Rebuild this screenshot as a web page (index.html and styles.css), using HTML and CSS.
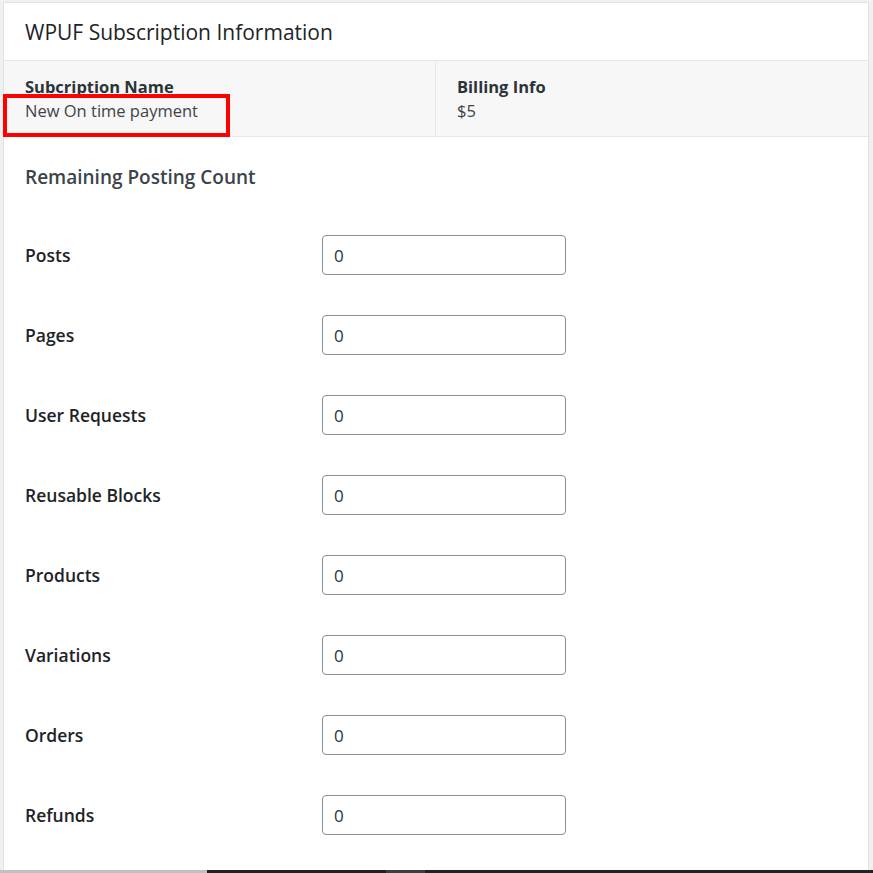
FILE: index.html
```html
<!DOCTYPE html>
<html lang="en">
<head>
  <meta charset="UTF-8">
  <meta name="viewport" content="width=device-width, initial-scale=1.0">
  <title>WPUF Subscription Information</title>
  <link rel="stylesheet" href="styles.css">
</head>
<body>
  <div class="wrap">
    <div class="postbox">
      <h2 class="postbox-title">WPUF Subscription Information</h2>

      <div class="sub-info">
        <div class="sub-col name-col">
          <strong>Subcription Name</strong>
          <span>New On time payment</span>
          <div class="highlight"></div>
        </div>
        <div class="sub-col">
          <strong>Billing Info</strong>
          <span>$5</span>
        </div>
      </div>

      <div class="inside">
        <h3 class="count-title">Remaining Posting Count</h3>

        <div class="count-row">
          <label>Posts</label>
          <input type="text" value="0">
        </div>
        <div class="count-row">
          <label>Pages</label>
          <input type="text" value="0">
        </div>
        <div class="count-row">
          <label>User Requests</label>
          <input type="text" value="0">
        </div>
        <div class="count-row">
          <label>Reusable Blocks</label>
          <input type="text" value="0">
        </div>
        <div class="count-row">
          <label>Products</label>
          <input type="text" value="0">
        </div>
        <div class="count-row">
          <label>Variations</label>
          <input type="text" value="0">
        </div>
        <div class="count-row">
          <label>Orders</label>
          <input type="text" value="0">
        </div>
        <div class="count-row">
          <label>Refunds</label>
          <input type="text" value="0">
        </div>
      </div>
    </div>
  </div>
  <div class="taskbar">
    <span class="tb-grey"></span>
    <span class="tb-dark"></span>
    <span class="tb-mid"></span>
    <span class="tb-rest"></span>
  </div>
</body>
</html>
```

FILE: styles.css
```css
html, body {
  height: 100%;
}

body {
  margin: 0;
  background: #f0f0f1;
  font-family: "Open Sans", "Noto Sans", sans-serif;
  color: #3c434a;
  overflow: hidden;
  display: flex;
  flex-direction: column;
}

.wrap {
  flex: 1;
  padding: 2px 4px 0 3px;
  display: flex;
  min-height: 0;
}

.postbox {
  flex: 1;
  background: #fff;
  border: 1px solid #e2e2e2;
  border-bottom: 0;
}

.postbox-title {
  margin: 0;
  height: 57px;
  padding-left: 21px;
  display: flex;
  align-items: center;
  font-size: 21px;
  font-weight: 400;
  color: #1d2327;
  border-bottom: 1px solid #e7e7e7;
}

.sub-info {
  display: flex;
  height: 75px;
  background: #f7f7f7;
  border-bottom: 1px solid #e7e7e7;
}

.sub-col {
  flex: 1;
  padding: 14px 21px 0;
  display: flex;
  flex-direction: column;
  font-size: 16.5px;
  line-height: 24px;
}

.sub-col strong {
  color: #2c3338;
  font-weight: 700;
}

.name-col {
  flex: 0 0 432px;
  box-sizing: border-box;
  position: relative;
  border-right: 1px solid #e7e7e7;
}

.highlight {
  position: absolute;
  left: -1px;
  top: 33px;
  width: 219px;
  height: 35px;
  border: 4px solid #f00;
}

.inside {
  padding: 24px 21px 0;
}

.count-title {
  margin: 0 0 42px;
  font-size: 19px;
  font-weight: 600;
  line-height: 32px;
  color: #3c434a;
}

.count-row {
  display: flex;
  align-items: center;
  height: 40px;
  margin-bottom: 40px;
}

.count-row label {
  width: 297px;
  font-size: 17.5px;
  font-weight: 600;
  color: #1d2327;
}

.count-row input {
  width: 244px;
  height: 40px;
  box-sizing: border-box;
  border: 1px solid #8c8f94;
  border-radius: 4px;
  padding: 0 11px;
  font-family: inherit;
  font-size: 17px;
  color: #2c3338;
  background: #fff;
}

.taskbar {
  display: flex;
  height: 3px;
}

.tb-grey { width: 207px; background: #c0c0c0; }
.tb-dark { width: 179px; background: #231f1f; }
.tb-mid { width: 39px; background: #3a3f3f; }
.tb-rest { flex: 1; background: #1d2327; }
```
